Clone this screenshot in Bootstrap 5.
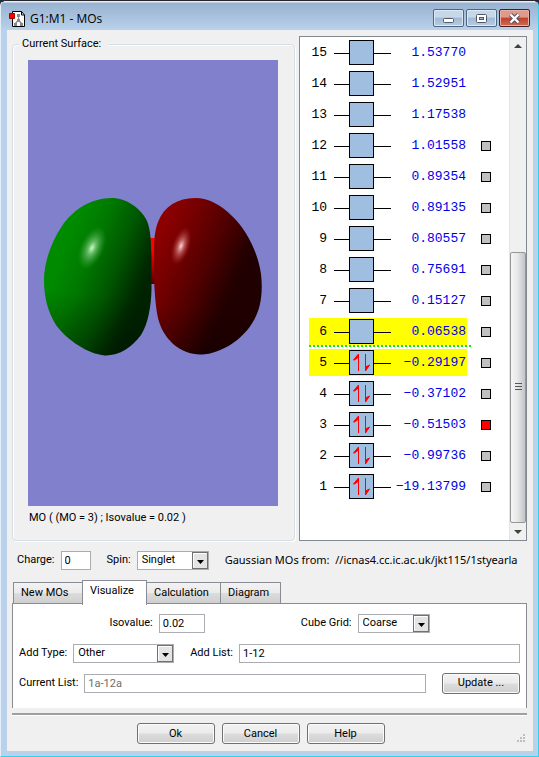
<!DOCTYPE html>
<html lang="en">
<head>
<meta charset="utf-8">
<meta name="viewport" content="width=device-width, initial-scale=1">
<title>G1:M1 - MOs</title>
<link href="https://cdn.jsdelivr.net/npm/bootstrap@5.3.0/dist/css/bootstrap.min.css" rel="stylesheet">
<style>
body{font:11px/16px Roboto,"Liberation Sans",sans-serif;color:#000;background:#222c3a}
.win{min-height:100vh;background:#b9d1ea;border:1px solid #2fd3ea;border-left-color:#e4eef8;border-top:1px solid #26282c;border-radius:6px 6px 0 0;padding:0 5px 5px 6px}
.titlebar{height:29px;background:linear-gradient(#e6eef7 0 1px,#98b3d1 2px,#b9d1ea);margin:0 -5px 0 -6px;padding:0 8px 0 8px;border-radius:5px 5px 0 0}
.titlebar h1{font:12px/18px "Open Sans",sans-serif;margin:6px 0 0 4px}
.wbtns{gap:2px;margin-top:5px}
.wbtn{width:31px;height:18px;padding:0;border:1px solid #4f6680;border-radius:2px;box-shadow:inset 0 0 0 1px #dce8f4;background:linear-gradient(#c6d7e9 45%,#9fb8d3 50%,#b8cee6)}
.wbtn-close{border-color:#4b1d1b;box-shadow:inset 0 0 0 1px #e8b0a4;background:linear-gradient(#e09a8b 45%,#c1402a 50%,#cf6c55)}
.client{background:#f0f0f0;padding:6px 6px 7px 5px}
.upper{gap:4px}
.surface{border:1px solid #d5dfe5;border-radius:4px;box-shadow:inset 1px 1px #fff,1px 1px #fff;margin-top:8px;padding:0 16px 14px 15px}
.surface h2{font:11px/16px Roboto,sans-serif;align-self:flex-start;background:#f0f0f0;margin:-9px 0 8px -9px;padding:0 8px 0 3px}
.surface p{margin:4px 0 0 1px}
.scene{background:#8080cc;min-height:300px;flex:1 1 0}
.scene svg{width:100%;height:100%}
.levels{width:228px;flex:none;border:1px solid #828790;background:#fff}
.levels table{align-self:flex-start;flex:none;border-collapse:separate;border-spacing:0;margin-left:9px;font:13px/20px "Liberation Mono",monospace}
.levels td{height:31px;padding:0;border:solid transparent;border-width:2px 0;background-clip:padding-box;vertical-align:middle}
.c-no{width:25px;padding-right:7px!important;text-align:right}
.c-orb{width:57px}
.c-val{width:76px;padding-right:1px!important;text-align:right;color:#0000e6;white-space:nowrap}
.c-pick{width:25px;padding-left:14px!important}
.frontier td:not(.c-pick){background-color:#ff0}
.levels .fermi{background:repeating-linear-gradient(90deg,#00f000 0 2px,#fff 2px 4px) left bottom/162px 2px no-repeat}
.levels svg,.pick{display:block}
.pick{appearance:none;width:10px;height:10px;margin:0;border:1px solid #000;background:#c0c0c0}
.pick:checked{background:#f00}
.vscroll{width:17px;background:#f0f0f0;border-left:1px solid #e3e3e3}
.vscroll button{height:17px;border:0;background:none;padding:0;line-height:0}
.track{flex:198 1 0}
.thumb{flex:270 1 0;border:1px solid #979797;border-radius:2px;background:linear-gradient(90deg,#f5f5f5,#e8e8ea 45%,#c4c4c8)}
.pair{gap:6px}
.field,.pick-list{height:19px;border:1px solid #abadb3;border-radius:0;background:#fff;color:#000;font:11px/16px Roboto,sans-serif;padding:0 3px;min-width:0}
.pick-list{appearance:none;padding:0 20px 2px 4px;background:#fff url("data:image/svg+xml,%3Csvg xmlns='http://www.w3.org/2000/svg' width='16' height='17'%3E%3Crect x='.5' y='.5' width='15' height='16' fill='%23e4e4e4' stroke='%23707070'/%3E%3Cpath d='M1.5 15.500V1.500H14.500' fill='none' stroke='%23fff'/%3E%3Cpath d='M5 8h7l-3.500 4z'/%3E%3C/svg%3E") right top no-repeat}
.field:disabled{color:#6d6d6d}
.w-chg{width:30px}.w-iso{width:46px}.w-sm{width:72px}.w-md{width:101px}
.setup{margin-top:9px;padding:0 6px 0 5px;height:20px;gap:16px}
.source{font:11px/18px "Noto Sans",sans-serif}
.tabs{margin-top:10px;padding-left:1px}
.tabs button{height:22px;border:1px solid #898c95;background:linear-gradient(#f2f2f2,#ebebeb 48%,#dcdcdc 52%,#cfcfcf);padding:0 7px;text-align:left;margin-right:-1px;color:#000}
.tabs button.active{height:25px;background:#fff;border-bottom:0;margin-bottom:-1px;position:relative;padding-bottom:4px}
.t1{width:70px}.t2{width:65px}.t3{width:75px}.t4{width:61px}
.pane{border:1px solid #898c95;border-bottom:0;background:#fff;padding:9px 6px 15px;margin-top:-1px;gap:10px}
.pane .line{height:20px}
.iso-line{gap:96px}
.push-btn{width:78px;height:21px;border:1px solid #707070;border-radius:3px;background:linear-gradient(#f3f3f3,#ebebeb 48%,#dcdcdc 52%,#cfcfcf);box-shadow:inset 0 0 0 1px #fbfbfb;padding:0;color:#000}
.rule{border-top:2px solid #a0a0a0;border-bottom:1px solid #fff;margin-top:5px}
.actions{margin-top:7px;position:relative;padding-right:18px}
.act-set{gap:7px}
.grip{position:absolute;right:2px;bottom:2px}
</style>
<script src="https://cdn.jsdelivr.net/npm/bootstrap@5.3.0/dist/js/bootstrap.bundle.min.js"></script>
</head>
<body>
<div class="win d-flex flex-column">
  <header class="titlebar d-flex align-items-center">
    <svg width="17" height="17" viewBox="0 0 17 17" class="mt-2"><path d="M3.500.5H12.500L15.500 4V15.500H3.500z" fill="#fff" stroke="#000"/><path d="M12.500.5V4H15.500" fill="none" stroke="#000"/><path d="M9.500 5V9L6 13M9.500 9l3.500 4" stroke="#888" stroke-width="1.200" fill="none"/><g fill="#888"><path d="M8 3h3v3H8zM8 8h3v3H8zM5 12h3v3H5zM11 12h3v3h-3z"/></g><path d="M.5 2.500h5v5h-5z" fill="#f00" stroke="#a00"/></svg>
    <h1 class="flex-grow-1">G1:M1 - MOs</h1>
    <div class="wbtns d-flex">
      <button class="wbtn" type="button" aria-label="Minimize"><svg width="29" height="16" class="d-block"><rect x="9.500" y="8.500" width="10" height="4" rx="1" fill="#fff" stroke="#535666"/></svg></button>
      <button class="wbtn" type="button" aria-label="Maximize"><svg width="29" height="16" class="d-block"><rect x="9.500" y="4.500" width="10" height="8" rx="1" fill="#fff" stroke="#535666"/><rect x="12.500" y="7.500" width="4" height="2" fill="#a6bdd8" stroke="#535666"/></svg></button>
      <button class="wbtn wbtn-close" type="button" aria-label="Close"><svg width="29" height="16" class="d-block"><path d="M10.500 4.500l8 8m0-8l-8 8" stroke="#535666" stroke-width="4.500"/><path d="M10.500 4.500l8 8m0-8l-8 8" stroke="#fff" stroke-width="2.400"/></svg></button>
    </div>
  </header>
  <main class="client flex-grow-1 d-flex flex-column">
    <div class="upper d-flex flex-grow-1">
      <section class="surface flex-grow-1 d-flex flex-column">
        <h2>Current Surface:</h2>
        <div class="scene">
          <svg viewBox="28 60 250 446" role="img" aria-label="Molecular orbital 3">
            <defs>
              <linearGradient id="gG" gradientUnits="userSpaceOnUse" x1="84" y1="202" x2="167" y2="236"><stop offset="0" stop-color="#008a00"/><stop offset=".3" stop-color="#007800"/><stop offset=".6" stop-color="#005800"/><stop offset=".9" stop-color="#002a00"/><stop offset="1" stop-color="#002200"/></linearGradient>
              <linearGradient id="gR" gradientUnits="userSpaceOnUse" x1="170" y1="212" x2="254" y2="250"><stop offset="0" stop-color="#8c0000"/><stop offset=".3" stop-color="#700000"/><stop offset=".6" stop-color="#500000"/><stop offset=".92" stop-color="#260000"/><stop offset="1" stop-color="#200000"/></linearGradient>
              <linearGradient id="gB" x1="0" y1="0" x2="0" y2="1"><stop offset=".3" stop-color="#f00"/><stop offset="1" stop-color="#500000"/></linearGradient>
              <linearGradient id="gS" gradientUnits="userSpaceOnUse" x1="130" y1="300" x2="122" y2="365"><stop offset="0" stop-color="#000" stop-opacity="0"/><stop offset="1" stop-color="#000" stop-opacity=".3"/></linearGradient>
              <radialGradient id="hG"><stop offset="0" stop-color="#c8ffc8"/><stop offset=".3" stop-color="#7cc87c" stop-opacity=".8"/><stop offset="1" stop-color="#30a030" stop-opacity="0"/></radialGradient>
              <radialGradient id="hR"><stop offset="0" stop-color="#ffd4d4"/><stop offset=".35" stop-color="#cc7070" stop-opacity=".8"/><stop offset="1" stop-color="#a02020" stop-opacity="0"/></radialGradient>
              <path id="lobeG" d="M112 198C126 198 141 208 147 221C151 231 151 243 151.500 256V290C151 307 148 324 141 335C132 347 120 355.500 105 355.500C88 354 67 340 56 325C48 312 44 298 44 280C44 263 51 242 62 226C73 210 90 198 112 198z"/>
              <path id="lobeR" d="M195 198C178 198 164 206 158 222C154 232 154 244 154 257C153.500 275 154.500 302 158 318C163 339 180 354.500 201 354.500C221 354 244 339 254 320C261 308 263 292 261 274C258 253 247 230 232 216C221 205 209 198 195 198z"/>
            </defs>
            <path d="M150 238h6v46h-6z" fill="url(#gB)"/>
            <use href="#lobeG" fill="url(#gG)"/>
            <use href="#lobeG" fill="url(#gS)"/>
            <use href="#lobeR" fill="url(#gR)"/>
            <use href="#lobeR" fill="url(#gS)"/>
            <ellipse cx="92" cy="248" rx="12" ry="23" transform="rotate(24 92 248)" fill="url(#hG)"/>
            <ellipse cx="181" cy="246" rx="9" ry="20" transform="rotate(18 181 246)" fill="url(#hR)"/>
          </svg>
        </div>
        <p>MO ( (MO = 3) ; Isovalue = 0.02 )</p>
      </section>
      <section class="levels d-flex justify-content-between" aria-label="Orbital energies">
        <table><tbody id="mo-rows"></tbody></table>
        <div class="vscroll d-flex flex-column">
          <button type="button" aria-label="Scroll up"><svg class="mx-auto" width="8" height="4"><path d="M0 4h8L4 0z" fill="#404040"/></svg></button>
          <div class="track"></div>
          <div class="thumb d-flex align-items-center justify-content-center"><svg width="7" height="8"><path d="M0 .5h7M0 3.500h7M0 6.500h7" stroke="#555"/></svg></div>
          <button type="button" aria-label="Scroll down"><svg class="mx-auto" width="8" height="4"><path d="M0 0h8L4 4z" fill="#404040"/></svg></button>
        </div>
      </section>
    </div>
    <div class="setup d-flex align-items-center">
      <div class="pair d-flex align-items-center"><label for="charge">Charge:</label><input id="charge" class="field w-chg" value="0"></div>
      <div class="pair d-flex align-items-center"><label for="spin">Spin:</label><select id="spin" class="pick-list w-sm"><option>Singlet</option><option>Triplet</option></select></div>
      <div class="source flex-grow-1 overflow-hidden text-nowrap">Gaussian MOs from:&nbsp; //icnas4.cc.ic.ac.uk/jkt115/1styearla</div>
    </div>
    <div class="tabs d-flex align-items-end" role="tablist">
      <button class="t1" type="button" role="tab">New MOs</button>
      <button class="t2 active" type="button" role="tab" aria-selected="true">Visualize</button>
      <button class="t3" type="button" role="tab">Calculation</button>
      <button class="t4" type="button" role="tab">Diagram</button>
    </div>
    <div class="pane d-flex flex-column" role="tabpanel">
      <div class="line iso-line d-flex align-items-center justify-content-center">
        <div class="pair d-flex align-items-center"><label for="iso">Isovalue:</label><input id="iso" class="field w-iso" value="0.02"></div>
        <div class="pair d-flex align-items-center"><label for="grid">Cube Grid:</label><select id="grid" class="pick-list w-sm"><option>Coarse</option><option>Medium</option><option>Fine</option></select></div>
      </div>
      <div class="line d-flex align-items-center gap-3">
        <div class="pair d-flex align-items-center"><label for="type">Add Type:</label><select id="type" class="pick-list w-md"><option>Other</option><option>All</option></select></div>
        <div class="pair d-flex align-items-center flex-grow-1"><label for="add">Add List:</label><input id="add" class="field flex-grow-1" value="1-12"></div>
      </div>
      <div class="line d-flex align-items-center gap-3">
        <div class="pair d-flex align-items-center flex-grow-1"><label for="cur">Current List:</label><input id="cur" class="field flex-grow-1" value="1a-12a" disabled></div>
        <button class="push-btn" type="button">Update ...</button>
      </div>
    </div>
    <div class="rule"></div>
    <div class="actions d-flex justify-content-center">
      <div class="act-set d-flex">
        <button class="push-btn" type="button">Ok</button>
        <button class="push-btn" type="button">Cancel</button>
        <button class="push-btn" type="button">Help</button>
      </div>
      <svg class="grip" width="8" height="8"><path d="M6 0h2v2H6zM3 3h2v2H3zM6 3h2v2H6zM0 6h2v2H0zM3 6h2v2H3zM6 6h2v2H6z" fill="#bfbfbf"/></svg>
    </div>
  </main>
</div>
<script>
const energies = ["−19.13799","−0.99736","−0.51503","−0.37102","−0.29197","0.06538","0.15127","0.75691","0.80557","0.89135","0.89354","1.01558","1.17538","1.52951","1.53770"];
const arrows = '<path d="M24.500 4v17M24.500 4l-5 6h1l4-3z" fill="red" stroke="red"/><path d="M31.500 4v17M31.500 21l4-6-4 2z" fill="red" stroke="red"/>';
let rows = "";
for (let n = 15; n >= 1; n--) {
  const cls = (n === 5 || n === 6 ? "frontier " : "") + (n === 6 ? "fermi" : "");
  const pick = n <= 12 ? `<input class="pick" type="checkbox" aria-label="Orbital ${n}"${n === 3 ? " checked" : ""}>` : "";
  rows += `<tr class="${cls}"><td class="c-no">${n}</td><td class="c-orb"><svg width="57" height="25"><path d="M0 13.500h57" stroke="#000"/><rect x="15.500" y=".5" width="24" height="24" fill="#a0bfe0" stroke="#000"/>${n <= 5 ? arrows : ""}</svg></td><td class="c-val">${energies[n - 1]}</td><td class="c-pick">${pick}</td></tr>`;
}
document.getElementById("mo-rows").innerHTML = rows;
</script>
</body>
</html>
